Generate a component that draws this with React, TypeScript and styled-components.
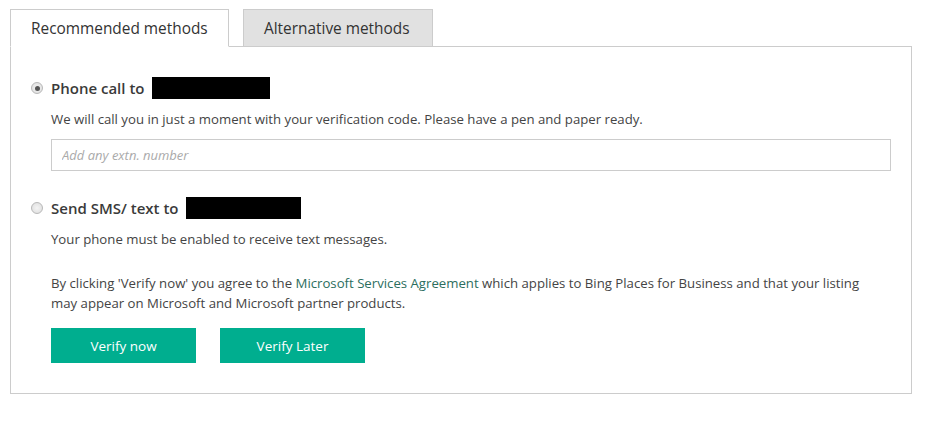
import React from 'react'
import styled, { createGlobalStyle } from 'styled-components'

const GlobalStyle = createGlobalStyle`
  body {
    margin: 0;
    background: #fff;
    font-family: 'Open Sans', 'Noto Sans', sans-serif;
    color: #444;
  }
`

const Page = styled.div`
  padding: 9px 19px 0 10px;
`

const Tabs = styled.div`
  display: flex;
  gap: 14px;
  margin-bottom: -1px;
  position: relative;
  z-index: 1;
`

const Tab = styled.div<{ $active?: boolean }>`
  box-sizing: border-box;
  height: 38px;
  width: ${p => (p.$active ? '219px' : '190px')};
  padding-left: 20px;
  display: flex;
  align-items: center;
  font-size: 15.4px;
  color: #333;
  border: 1px solid #ccc;
  border-bottom-color: ${p => (p.$active ? '#fff' : '#ccc')};
  background: ${p => (p.$active ? '#fff' : '#e1e1e1')};
`

const Panel = styled.div`
  border: 1px solid #ccc;
  padding: 30px 20px 30px 20px;
`

const OptionRow = styled.label`
  display: flex;
  align-items: center;
  gap: 8px;
  height: 22px;
  font-size: 15px;
  font-weight: 600;
  color: #3a3a3a;
`

const Radio = styled.span<{ $checked?: boolean }>`
  box-sizing: border-box;
  width: 12px;
  height: 12px;
  border-radius: 50%;
  border: 1px solid #b8b8b8;
  background: radial-gradient(circle, #f4f4f4 0%, #dcdcdc 100%);
  display: flex;
  align-items: center;
  justify-content: center;

  &::after {
    content: '';
    display: ${p => (p.$checked ? 'block' : 'none')};
    width: 5px;
    height: 5px;
    border-radius: 50%;
    background: #555;
  }
`

const Redacted = styled.span<{ $width: number }>`
  display: inline-block;
  width: ${p => p.$width}px;
  height: 22px;
  background: #000;
`

const Indented = styled.div`
  padding-left: 20px;
`

const Note = styled.p<{ $top?: number }>`
  margin: ${p => p.$top ?? 10}px 0 0;
  max-width: 825px;
  font-size: 13.2px;
  line-height: 20px;
  color: #444;
`

const ExtInput = styled.input`
  box-sizing: border-box;
  display: block;
  width: 100%;
  height: 32px;
  margin: 10px 0 26px;
  border: 1px solid #ccc;
  padding: 0 10px;
  font-family: inherit;
  font-size: 13px;
  outline: none;

  &::placeholder {
    color: #aaa;
    font-style: italic;
  }
`

const Link = styled.a`
  color: #2c6e5e;
  text-decoration: none;
`

const Buttons = styled.div`
  display: flex;
  gap: 24px;
  margin-top: 15px;
`

const Button = styled.button`
  width: 145px;
  height: 35px;
  border: none;
  background: #00ae8f;
  color: #fff;
  font-family: inherit;
  font-size: 13.5px;
`

export default function App() {
  return (
    <Page>
      <GlobalStyle />
      <Tabs>
        <Tab $active>Recommended methods</Tab>
        <Tab>Alternative methods</Tab>
      </Tabs>
      <Panel>
        <OptionRow>
          <Radio $checked />
          Phone call to <Redacted $width={118} />
        </OptionRow>
        <Indented>
          <Note $top={10}>
            We will call you in just a moment with your verification code. Please have a pen and
            paper ready.
          </Note>
          <ExtInput placeholder="Add any extn. number" />
        </Indented>
        <OptionRow>
          <Radio />
          Send SMS/ text to <Redacted $width={115} />
        </OptionRow>
        <Indented>
          <Note $top={10}>Your phone must be enabled to receive text messages.</Note>
          <Note $top={24}>
            By clicking 'Verify now' you agree to the <Link href="#">Microsoft Services Agreement</Link>{' '}
            which applies to Bing Places for Business and that your listing may appear on Microsoft
            and Microsoft partner products.
          </Note>
          <Buttons>
            <Button>Verify now</Button>
            <Button>Verify Later</Button>
          </Buttons>
        </Indented>
      </Panel>
    </Page>
  )
}
